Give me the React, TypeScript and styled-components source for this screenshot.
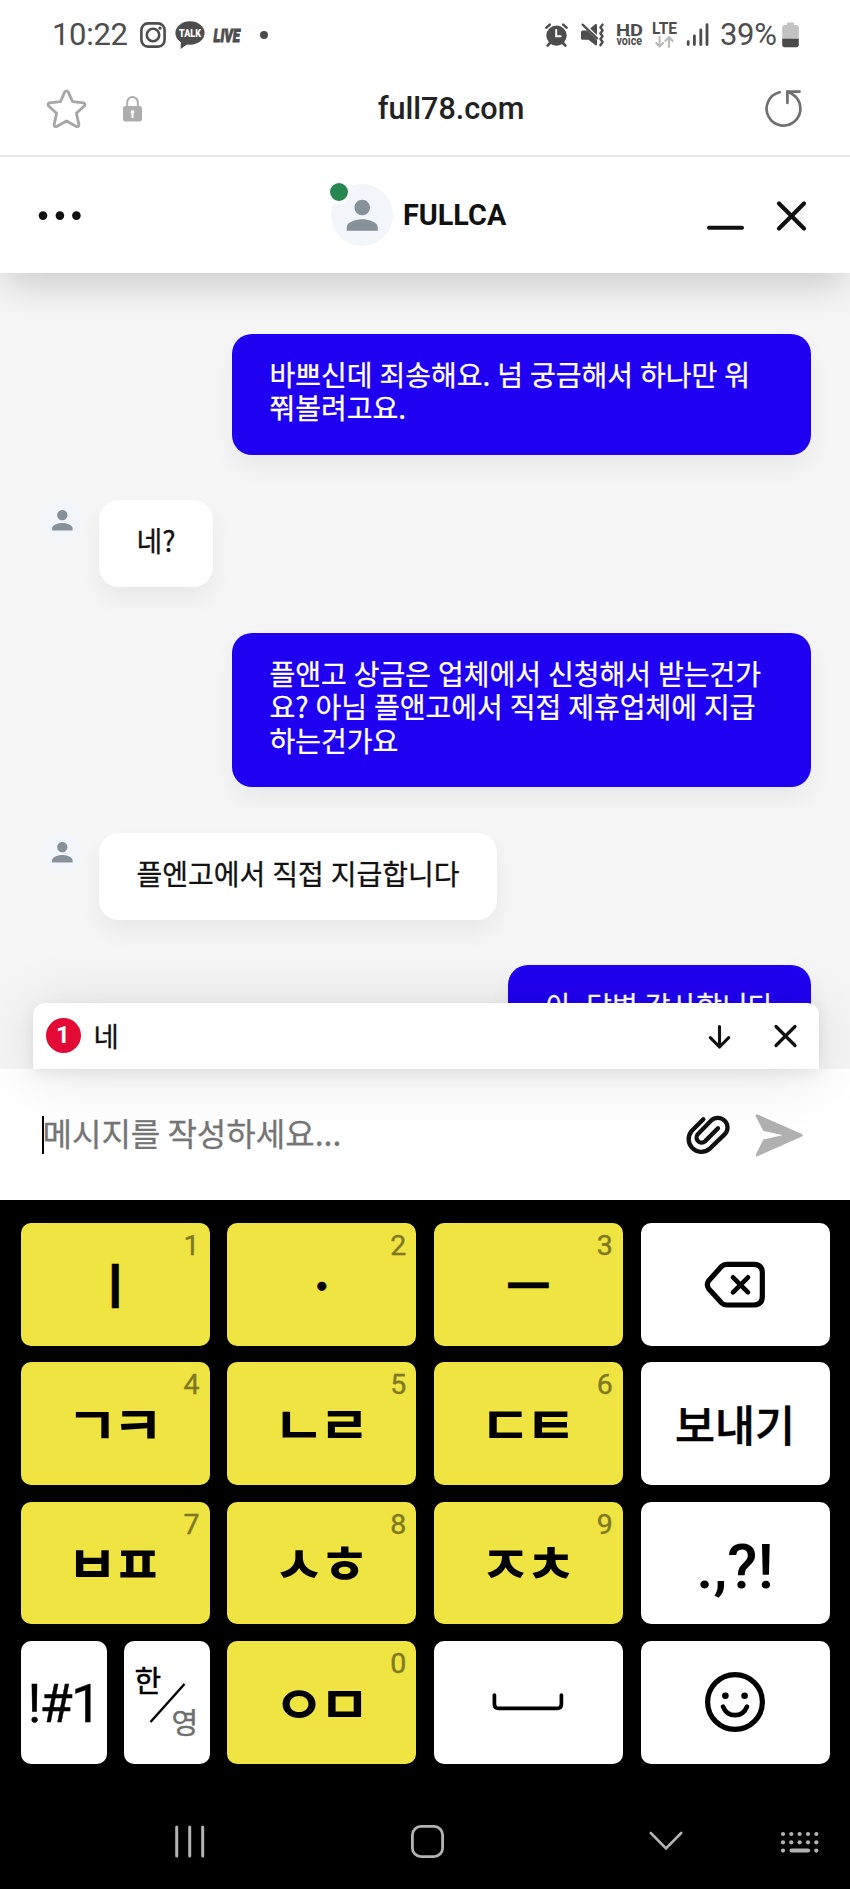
import React from "react";
import styled, { createGlobalStyle, css } from "styled-components";

const GlobalStyle = createGlobalStyle`
  * { box-sizing: border-box; }
  body { margin: 0; background: #000; }
`;

const latin = `Roboto, "Noto Sans CJK KR", sans-serif`;
const korean = `"Noto Sans CJK KR", sans-serif`;

const Screen = styled.div`
  width: 850px;
  height: 1889px;
  overflow: hidden;
  display: flex;
  flex-direction: column;
  background: #000;
  font-family: ${latin};
`;

const Icon = styled.svg<{ $ml?: number }>`
  display: block;
  flex: none;
  overflow: visible;
  margin-left: ${(p) => p.$ml ?? 0}px;
`;

/* ---------- status bar ---------- */

const StatusBar = styled.div`
  height: 70px;
  flex: none;
  display: flex;
  align-items: center;
  justify-content: space-between;
  padding: 0 51px 0 52px;
  background: #fefefe;
  color: #4d4d4d;
`;

const StatusGroup = styled.div`
  display: flex;
  align-items: center;
`;

const StatusText = styled.span<{ $ml?: number; $width: number }>`
  font-size: 31px;
  line-height: 36px;
  width: ${(p) => p.$width}px;
  margin-left: ${(p) => p.$ml ?? 0}px;
  font-weight: 400;
  letter-spacing: -0.3px;
  white-space: nowrap;
`;

/* ---------- browser bar ---------- */

const BrowserBar = styled.div`
  position: relative;
  z-index: 4;
  height: 87px;
  flex: none;
  display: grid;
  grid-template-columns: 1fr auto 1fr;
  align-items: center;
  padding: 0 48px 7px 46px;
  background: #fefefe;
  border-bottom: 2px solid #e6e6e6;
`;

const BrowserSide = styled.div<{ $end?: boolean }>`
  display: flex;
  align-items: center;
  justify-content: ${(p) => (p.$end ? "flex-end" : "flex-start")};
`;

const Address = styled.div`
  font-size: 30.6px;
  line-height: 36px;
  font-weight: 500;
  color: #222;
  padding-left: 54px;
`;

/* ---------- chat header ---------- */

const ChatHeader = styled.header`
  position: relative;
  z-index: 3;
  height: 116px;
  flex: none;
  display: flex;
  align-items: center;
  padding: 0 44px 0 38px;
  background: #fff;
  box-shadow: 0 16px 38px -6px rgba(0, 0, 0, 0.19);
`;

const Agent = styled.div`
  display: flex;
  align-items: center;
  margin-left: 250px;
  flex: 1;
`;

const AgentName = styled.span`
  margin-left: 10px;
  font-size: 28.8px;
  font-weight: 700;
  line-height: 34px;
  color: #111;
`;

const Avatar = styled.div<{ $size: number }>`
  position: relative;
  flex: none;
  width: ${(p) => p.$size}px;
  height: ${(p) => p.$size}px;
  border-radius: 50%;
  background: #f2f6fa;
  display: flex;
  align-items: center;
  justify-content: center;
`;

const OnlineDot = styled.span`
  position: absolute;
  left: -4px;
  top: -4px;
  width: 24px;
  height: 24px;
  border-radius: 50%;
  border: 3.6px solid #fff;
  background: #268750;
`;

/* ---------- conversation ---------- */

const ChatArea = styled.main`
  position: relative;
  height: 796px;
  flex: none;
  background: #f5f5f5;
`;

const Messages = styled.div`
  height: 100%;
  overflow: hidden;
  display: flex;
  flex-direction: column;
  gap: 45.4px;
  padding: 60.7px 39.5px 0 42px;
`;

const MessageRow = styled.div<{ $mine?: boolean }>`
  display: flex;
  flex: none;
  align-items: flex-start;
  justify-content: ${(p) => (p.$mine ? "flex-end" : "flex-start")};
  gap: 17px;
`;

const Bubble = styled.div<{ $mine?: boolean }>`
  padding: 24px 37px 29.5px 37.5px;
  border-radius: 20px;
  font-family: ${korean};
  font-size: 28px;
  line-height: 33.7px;
  word-spacing: 0.7px;
  white-space: pre;
  box-shadow: 0 12px 24px -2px rgba(0, 0, 0, 0.06);
  ${(p) =>
    p.$mine
      ? css`
          background: #2000f0;
          color: #fff;
          -webkit-text-stroke: 0.3px #fff;
        `
      : css`
          background: #fff;
          color: #111;
          -webkit-text-stroke: 0.3px #111;
        `}
`;

const LongBubble = styled(Bubble)`
  width: 578.5px;
`;

const Notice = styled.div`
  position: absolute;
  z-index: 2;
  left: 33px;
  right: 31.5px;
  bottom: 0;
  height: 66.5px;
  display: flex;
  align-items: center;
  padding: 0 22px 0 12.5px;
  border-radius: 12px 12px 0 0;
  background: #fff;
  box-shadow: 0 4px 16px rgba(0, 0, 0, 0.08), 0 6px 64px rgba(0, 0, 0, 0.11);
`;

const Badge = styled.span`
  width: 35px;
  height: 35px;
  border-radius: 50%;
  background: #e30b35;
  color: #fff;
  font-size: 24px;
  font-weight: 700;
  line-height: 34px;
  text-align: center;
`;

const NoticeText = styled.span`
  flex: 1;
  margin-left: 13px;
  padding-bottom: 2px;
  font-family: ${korean};
  font-size: 27.5px;
  line-height: 34px;
  color: #111;
  -webkit-text-stroke: 0.3px #111;
`;

/* ---------- composer ---------- */

const Composer = styled.div`
  height: 130.5px;
  flex: none;
  display: flex;
  align-items: center;
  padding: 2px 46.5px 0 41.5px;
  background: #fff;
`;

const Caret = styled.span`
  width: 2px;
  height: 38px;
  background: #000;
`;

const Placeholder = styled.span`
  flex: 1;
  margin-left: -1px;
  padding-bottom: 6px;
  font-family: ${korean};
  font-size: 32px;
  line-height: 40px;
  color: #757575;
  -webkit-text-stroke: 0.3px #757575;
`;

/* ---------- keyboard ---------- */

const Keyboard = styled.div`
  flex: none;
  display: grid;
  grid-template-columns: repeat(4, 189px);
  grid-auto-rows: 122.7px;
  column-gap: 17.7px;
  row-gap: 16.6px;
  padding: 23.5px 20.5px 0;
  background: #000;
`;

const KeyPair = styled.div`
  display: grid;
  grid-template-columns: 86px 86px;
  column-gap: 17px;
`;

const Key = styled.div<{ $yellow?: boolean }>`
  position: relative;
  display: flex;
  align-items: center;
  justify-content: center;
  border-radius: 10px;
  background: ${(p) => (p.$yellow ? "#f0e442" : "#fff")};
  color: #000;
`;

const KeyDigit = styled.span`
  position: absolute;
  top: 6px;
  right: 10px;
  font-size: 28.5px;
  line-height: 34px;
  color: #7f7923;
  -webkit-text-stroke: 0.4px #7f7923;
`;

const Consonants = styled.span`
  font-family: ${korean};
  font-size: 56px;
  font-weight: 700;
  line-height: 60px;
  letter-spacing: -6px;
  margin: 0 6px 1px 0;
  transform: scaleY(0.93);
`;

const Vowel = styled.span`
  font-family: ${korean};
  font-size: 48px;
  font-weight: 700;
  line-height: 60px;
  padding-bottom: 3px;
  -webkit-text-stroke: 0.6px #000;
`;

const KeyLabel = styled.span<{
  $size: number;
  $weight?: number;
  $top?: number;
  $spacing?: number;
  $stroke?: number;
}>`
  font-size: ${(p) => p.$size}px;
  font-weight: ${(p) => p.$weight ?? 500};
  line-height: 64px;
  padding-top: ${(p) => p.$top ?? 0}px;
  letter-spacing: ${(p) => p.$spacing ?? 0}px;
  -webkit-text-stroke: ${(p) => p.$stroke ?? 0}px #000;
  white-space: nowrap;
`;

/* ---------- navigation bar ---------- */

const NavBar = styled.nav`
  flex: 1;
  display: flex;
  align-items: center;
  padding: 31px 0 0 175px;
`;

const PersonIcon = ({ size }: { size: number }) => (
  <Icon width={size} height={size} viewBox="0 0 24 24" fill="#87919a">
    <path d="M12 12c2.21 0 4-1.79 4-4s-1.79-4-4-4-4 1.79-4 4 1.79 4 4 4zm0 2c-2.67 0-8 1.34-8 4v2h16v-2c0-2.66-5.33-4-8-4z" />
  </Icon>
);

const InstagramIcon = () => (
  <Icon $ml={11} width="26" height="26" viewBox="0 0 26 26" fill="none" stroke="#4d4d4d" strokeWidth="2.6">
    <rect x="1.4" y="1.4" width="23.2" height="23.2" rx="6.5" />
    <circle cx="13" cy="13" r="6.2" />
    <circle cx="20" cy="6.2" r="1.6" fill="#4d4d4d" stroke="none" />
  </Icon>
);

const TalkIcon = () => (
  <Icon $ml={9} width="30" height="28" viewBox="0 0 30 28">
    <ellipse cx="15" cy="12" rx="14.6" ry="11.8" fill="#4d4d4d" />
    <path d="M6 19 5.6 28 14 22Z" fill="#4d4d4d" />
    <text x="4" y="15.6" fontSize="10" fontWeight="900" fill="#fff" textLength="22" lengthAdjust="spacingAndGlyphs">
      TALK
    </text>
  </Icon>
);

const LiveIcon = () => (
  <Icon $ml={8} width="29" height="26" viewBox="0 0 29 26">
    <text
      x="0.5"
      y="20"
      fontSize="18.5"
      fontWeight="900"
      fontStyle="italic"
      fill="#4d4d4d"
      stroke="#4d4d4d"
      strokeWidth="0.9"
      textLength="26.5"
      lengthAdjust="spacingAndGlyphs"
    >
      LIVE
    </text>
  </Icon>
);

const MoreDot = () => (
  <Icon $ml={18} width="8" height="8" viewBox="0 0 8 8">
    <circle cx="4" cy="4" r="4" fill="#4d4d4d" />
  </Icon>
);

const AlarmIcon = () => (
  <Icon width="23" height="24" viewBox="0 0 23 24" stroke="#4d4d4d" strokeLinecap="round" fill="none">
    <circle cx="11.5" cy="12.6" r="10.2" fill="#4d4d4d" stroke="none" />
    <path d="M1.4 4.6 4.8 1.6M21.6 4.6 18.2 1.6" strokeWidth="2.6" />
    <path d="M5 20 2.6 22.6M18 20 20.4 22.6" strokeWidth="2.6" />
    <path d="M11.2 6.8V13.2H15.6" stroke="#fff" strokeWidth="2" />
  </Icon>
);

const MuteIcon = () => (
  <Icon $ml={13} width="23" height="24" viewBox="0 0 23 24" fill="#4d4d4d">
    <path d="M0 9.2Q0 7.6 1.6 7.6H6L16 17V21.5Q15.6 23 14.2 22L7.4 16.8H1.6Q0 16.8 0 15.2Z" />
    <path d="M9.2 5.4 14.2 1.2Q16 .4 16 2.2V12Z" />
    <path d="M1.6 1.6 16 15.4" stroke="#4d4d4d" strokeWidth="2.2" strokeLinecap="round" />
    <path
      d="M21.6 1.6 19.4 4.4 21.6 7.4 19.4 10.2 21.6 13.2 19.4 16 21.6 19 19.4 22.2"
      fill="none"
      stroke="#4d4d4d"
      strokeWidth="2.4"
      strokeLinecap="round"
      strokeLinejoin="round"
    />
  </Icon>
);

const HdVoiceIcon = () => (
  <Icon $ml={12} width="27" height="24" viewBox="0 0 27 24" fill="#4d4d4d">
    <text x="0" y="12.8" fontSize="17" fontWeight="700" textLength="27" lengthAdjust="spacingAndGlyphs">
      HD
    </text>
    <text x="0.5" y="22.2" fontSize="12" fontWeight="700" textLength="25.5" lengthAdjust="spacingAndGlyphs">
      voice
    </text>
  </Icon>
);

const LteIcon = () => (
  <Icon $ml={9} width="25" height="26" viewBox="0 0 25 26">
    <text x="0" y="11.8" fontSize="16" fontWeight="700" fill="#4d4d4d" textLength="25" lengthAdjust="spacingAndGlyphs">
      LTE
    </text>
    <path
      d="M7.6 15V24.4M4.2 21 7.6 24.6 11 21M17 25V15.4M13.4 19 17 15.2 20.6 19"
      fill="none"
      stroke="#b8b8b8"
      strokeWidth="2"
      strokeLinecap="round"
    />
  </Icon>
);

const SignalIcon = () => (
  <Icon $ml={9} width="23" height="24" viewBox="0 0 23 24" stroke="#4d4d4d" strokeWidth="2.8" strokeLinecap="round">
    <path d="M2.2 18.6V21.6M8.4 13V21.6M14.8 7V21.6M21 1.6V21.6" />
  </Icon>
);

const BatteryIcon = () => (
  <Icon $ml={4} width="17" height="26" viewBox="0 0 17 26">
    <path d="M5 1.5Q5 .6 6 .6H11Q12 .6 12 1.5V3H14Q16.8 3 16.8 6V17H.2V6Q.2 3 3 3H5Z" fill="#c2c2c2" />
    <path d="M.2 16.8H16.8V22.4Q16.8 25.2 14 25.2H3Q.2 25.2 .2 22.4Z" fill="#4a4a4a" />
  </Icon>
);

const StarIcon = () => (
  <Icon width="41" height="40" viewBox="0 0 41 40" fill="none" stroke="#a6a6a6" strokeWidth="2.8" strokeLinejoin="round">
    <path d="M18.8 2.9Q20.5.8 22.2 2.9L26.5 12.6 37.4 13.9Q39.8 14.7 38.6 16.7L30.4 24.3 32.9 35.6Q32.8 38.3 30.3 37.5L20.5 32 10.7 37.5Q8.2 38.3 8.1 35.6L10.6 24.3 2.4 16.7Q1.2 14.7 3.6 13.9L14.5 12.6Z" />
  </Icon>
);

const LockIcon = () => (
  <Icon $ml={36} width="19" height="26" viewBox="0 0 19 26">
    <path d="M4.2 11V6.3a5.3 5.3 0 0 1 10.6 0V11" fill="none" stroke="#adadad" strokeWidth="2" />
    <rect x="0" y="10" width="19" height="15.4" rx="2.6" fill="#adadad" />
    <path d="M9.5 14.2a1.9 1.9 0 0 1 1 3.5v4.2h-2v-4.2a1.9 1.9 0 0 1 1-3.5Z" fill="#fff" />
  </Icon>
);

const ReloadIcon = () => (
  <Icon width="38" height="38" viewBox="0 0 38 38" fill="none" stroke="#707070" strokeWidth="2.7" strokeLinecap="round">
    <path d="M15.6 2.2A16.9 16.9 0 1 0 28.6 4.4Q26.5 3 24 2" />
    <path d="M35.6 1.6H23.4V13" />
  </Icon>
);

const MenuDots = () => (
  <Icon width="43" height="10" viewBox="0 0 43 10" fill="#111">
    <circle cx="5" cy="5.6" r="4.3" />
    <circle cx="21.9" cy="5.6" r="4.3" />
    <circle cx="38.4" cy="5.6" r="4.3" />
  </Icon>
);

const MinimizeIcon = () => (
  <Icon width="37" height="30" viewBox="0 0 37 30" stroke="#111" strokeWidth="4" strokeLinecap="round">
    <path d="M2 27.8H35" />
  </Icon>
);

const CloseIcon = ({ size, weight, ml }: { size: number; weight: number; ml: number }) => (
  <Icon $ml={ml} width={size} height={size} viewBox={`0 0 ${size} ${size}`} stroke="#111" strokeWidth={weight} strokeLinecap="round">
    <path d={`M2 2.5 ${size - 2} ${size - 1.5}M${size - 2} 2.5 2 ${size - 1.5}`} />
  </Icon>
);

const ArrowDownIcon = () => (
  <Icon width="22" height="24" viewBox="0 0 22 24" fill="none" stroke="#111" strokeWidth="3.1" strokeLinecap="round" strokeLinejoin="round">
    <path d="M11.5 2.6V23M2.3 13.6 11.5 23 20.7 13.6" />
  </Icon>
);

const ClipIcon = () => (
  <Icon width="50" height="44" viewBox="775 400 150 132" fill="none" stroke="#111" strokeWidth="13" strokeLinecap="round">
    <path d="M836 419 801 454A38 38 0 0 0 854 508L900.5 463.5A29 29 0 0 0 859.5 422.5L821 462A14.5 14.5 0 0 0 841 485L880 446" />
  </Icon>
);

const SendIcon = () => (
  <Icon $ml={21} width="50" height="44" viewBox="985 398 150 132" fill="#b0b0b0" stroke="#b0b0b0" strokeWidth="8" strokeLinejoin="round">
    <path d="M994 406 1127 464.5 994 524 1015.5 481.5 1090 464.5 1015.5 448Z" />
  </Icon>
);

const BackspaceIcon = () => (
  <Icon width="62" height="48" viewBox="838 840 186 144" fill="none" stroke="#000" strokeLinecap="round" strokeLinejoin="round">
    <path
      strokeWidth="15.5"
      d="M906 853H987Q1013 853 1013 879V949Q1013 975 987 975H906Q897 975 891 969L852 926Q844 914 852 902L891 859Q897 853 906 853Z"
    />
    <path strokeWidth="14" d="M925 892 970 937M970 892 925 937" />
  </Icon>
);

const SpaceIcon = () => (
  <Icon width="71" height="18" viewBox="0 0 71 18" fill="none" stroke="#000" strokeWidth="3.7" strokeLinecap="round">
    <path d="M1.4 2V11Q1.4 15.4 5.8 15.4H64Q68.4 15.4 68.4 11V2" />
  </Icon>
);

const SmileyIcon = () => (
  <Icon width="60" height="60" viewBox="0 0 60 60" fill="none" stroke="#000" strokeLinecap="round">
    <circle cx="30" cy="30" r="27.4" strokeWidth="5.2" />
    <circle cx="20.4" cy="23.8" r="3.3" fill="#000" stroke="none" />
    <circle cx="39.6" cy="23.8" r="3.3" fill="#000" stroke="none" />
    <path d="M18 34.6C22.5 46 37.5 46 42 34.6" strokeWidth="4.6" />
  </Icon>
);

const LanguageIcon = () => (
  <Icon width="64" height="76" viewBox="0 0 64 76" fontFamily="Noto Sans CJK KR, sans-serif">
    <text x="-0.5" y="27.5" fontSize="29" stroke="#000" strokeWidth="0.5">
      한
    </text>
    <text x="36.5" y="69.5" fontSize="29" fill="#6e6e6e" stroke="#6e6e6e" strokeWidth="0.4">
      영
    </text>
    <path d="M15.5 58 49.5 20" stroke="#000" strokeWidth="2.4" />
  </Icon>
);

const RecentsIcon = () => (
  <Icon width="30" height="33" viewBox="0 0 30 33" stroke="#b3b3b3" strokeWidth="3" strokeLinecap="round">
    <path d="M1.7 2V31M14.7 2V31M27.7 2V31" />
  </Icon>
);

const HomeIcon = () => (
  <Icon $ml={206} width="33" height="33" viewBox="0 0 33 33" fill="none" stroke="#b3b3b3" strokeWidth="2.8">
    <rect x="1.4" y="1.4" width="30.2" height="30.2" rx="8.5" />
  </Icon>
);

const HideIcon = () => (
  <Icon $ml={205} width="34" height="20" viewBox="0 0 34 20" fill="none" stroke="#b3b3b3" strokeWidth="2.6" strokeLinecap="round">
    <path d="M1.8 1 17 16.4 32.2 1" />
  </Icon>
);

const columns = [2, 10.3, 18.6, 27, 35.3];

const KeyboardIcon = () => (
  <Icon $ml={98} width="38" height="21" viewBox="0 0 38 21" fill="#b3b3b3">
    {columns.map((x) => (
      <circle key={`a${x}`} cx={x} cy="3" r="2.1" />
    ))}
    {columns.map((x) => (
      <circle key={`b${x}`} cx={x} cy="11.3" r="2.1" />
    ))}
    <circle cx="2" cy="19.6" r="2.1" />
    <rect x="8.5" y="17.6" width="20.6" height="4" rx="2" />
    <circle cx="35.3" cy="19.6" r="2.1" />
  </Icon>
);

const VowelKey = ({ digit, label }: { digit: string; label: string }) => (
  <Key $yellow>
    <KeyDigit>{digit}</KeyDigit>
    <Vowel>{label}</Vowel>
  </Key>
);

const ConsonantKey = ({ digit, label }: { digit: string; label: string }) => (
  <Key $yellow>
    <KeyDigit>{digit}</KeyDigit>
    <Consonants>{label}</Consonants>
  </Key>
);

const Incoming = ({ text }: { text: string }) => (
  <MessageRow>
    <Avatar $size={40}>
      <PersonIcon size={30.7} />
    </Avatar>
    <Bubble>{text}</Bubble>
  </MessageRow>
);

export default function App() {
  return (
    <>
      <GlobalStyle />
      <Screen>
        <StatusBar>
          <StatusGroup>
            <StatusText $width={77}>10:22</StatusText>
            <InstagramIcon />
            <TalkIcon />
            <LiveIcon />
            <MoreDot />
          </StatusGroup>
          <StatusGroup>
            <AlarmIcon />
            <MuteIcon />
            <HdVoiceIcon />
            <LteIcon />
            <SignalIcon />
            <StatusText $ml={11} $width={58}>39%</StatusText>
            <BatteryIcon />
          </StatusGroup>
        </StatusBar>

        <BrowserBar>
          <BrowserSide>
            <StarIcon />
            <LockIcon />
          </BrowserSide>
          <Address>full78.com</Address>
          <BrowserSide $end>
            <ReloadIcon />
          </BrowserSide>
        </BrowserBar>

        <ChatHeader>
          <MenuDots />
          <Agent>
            <Avatar $size={62}>
              <PersonIcon size={46.5} />
              <OnlineDot />
            </Avatar>
            <AgentName>FULLCA</AgentName>
          </Agent>
          <MinimizeIcon />
          <CloseIcon size={29} weight={4.2} ml={33} />
        </ChatHeader>

        <ChatArea>
          <Messages>
            <MessageRow $mine>
              <LongBubble $mine>{"바쁘신데 죄송해요. 넘 궁금해서 하나만 워\n쭤볼려고요."}</LongBubble>
            </MessageRow>
            <Incoming text="네?" />
            <MessageRow $mine>
              <LongBubble $mine>
                {"플앤고 상금은 업체에서 신청해서 받는건가\n요? 아님 플앤고에서 직접 제휴업체에 지급\n하는건가요"}
              </LongBubble>
            </MessageRow>
            <Incoming text="플엔고에서 직접 지급합니다" />
            <MessageRow $mine>
              <Bubble $mine>아, 답변 감사합니다</Bubble>
            </MessageRow>
          </Messages>
          <Notice>
            <Badge>1</Badge>
            <NoticeText>네</NoticeText>
            <ArrowDownIcon />
            <CloseIcon size={23} weight={3.2} ml={43.5} />
          </Notice>
        </ChatArea>

        <Composer>
          <Caret />
          <Placeholder>메시지를 작성하세요...</Placeholder>
          <ClipIcon />
          <SendIcon />
        </Composer>

        <Keyboard>
          <VowelKey digit="1" label="ㅣ" />
          <VowelKey digit="2" label="ㆍ" />
          <VowelKey digit="3" label="ㅡ" />
          <Key>
            <BackspaceIcon />
          </Key>
          <ConsonantKey digit="4" label="ㄱㅋ" />
          <ConsonantKey digit="5" label="ㄴㄹ" />
          <ConsonantKey digit="6" label="ㄷㅌ" />
          <Key>
            <KeyLabel $size={43.5} $top={8} $stroke={0.5}>보내기</KeyLabel>
          </Key>
          <ConsonantKey digit="7" label="ㅂㅍ" />
          <ConsonantKey digit="8" label="ㅅㅎ" />
          <ConsonantKey digit="9" label="ㅈㅊ" />
          <Key>
            <KeyLabel $size={62} $top={8}>.,?!</KeyLabel>
          </Key>
          <KeyPair>
            <Key>
              <KeyLabel $size={54} $weight={400} $spacing={-1.8} $top={3} $stroke={0.4}>!#1</KeyLabel>
            </Key>
            <Key>
              <LanguageIcon />
            </Key>
          </KeyPair>
          <ConsonantKey digit="0" label="ㅇㅁ" />
          <Key>
            <SpaceIcon />
          </Key>
          <Key>
            <SmileyIcon />
          </Key>
        </Keyboard>

        <NavBar>
          <RecentsIcon />
          <HomeIcon />
          <HideIcon />
          <KeyboardIcon />
        </NavBar>
      </Screen>
    </>
  );
}
